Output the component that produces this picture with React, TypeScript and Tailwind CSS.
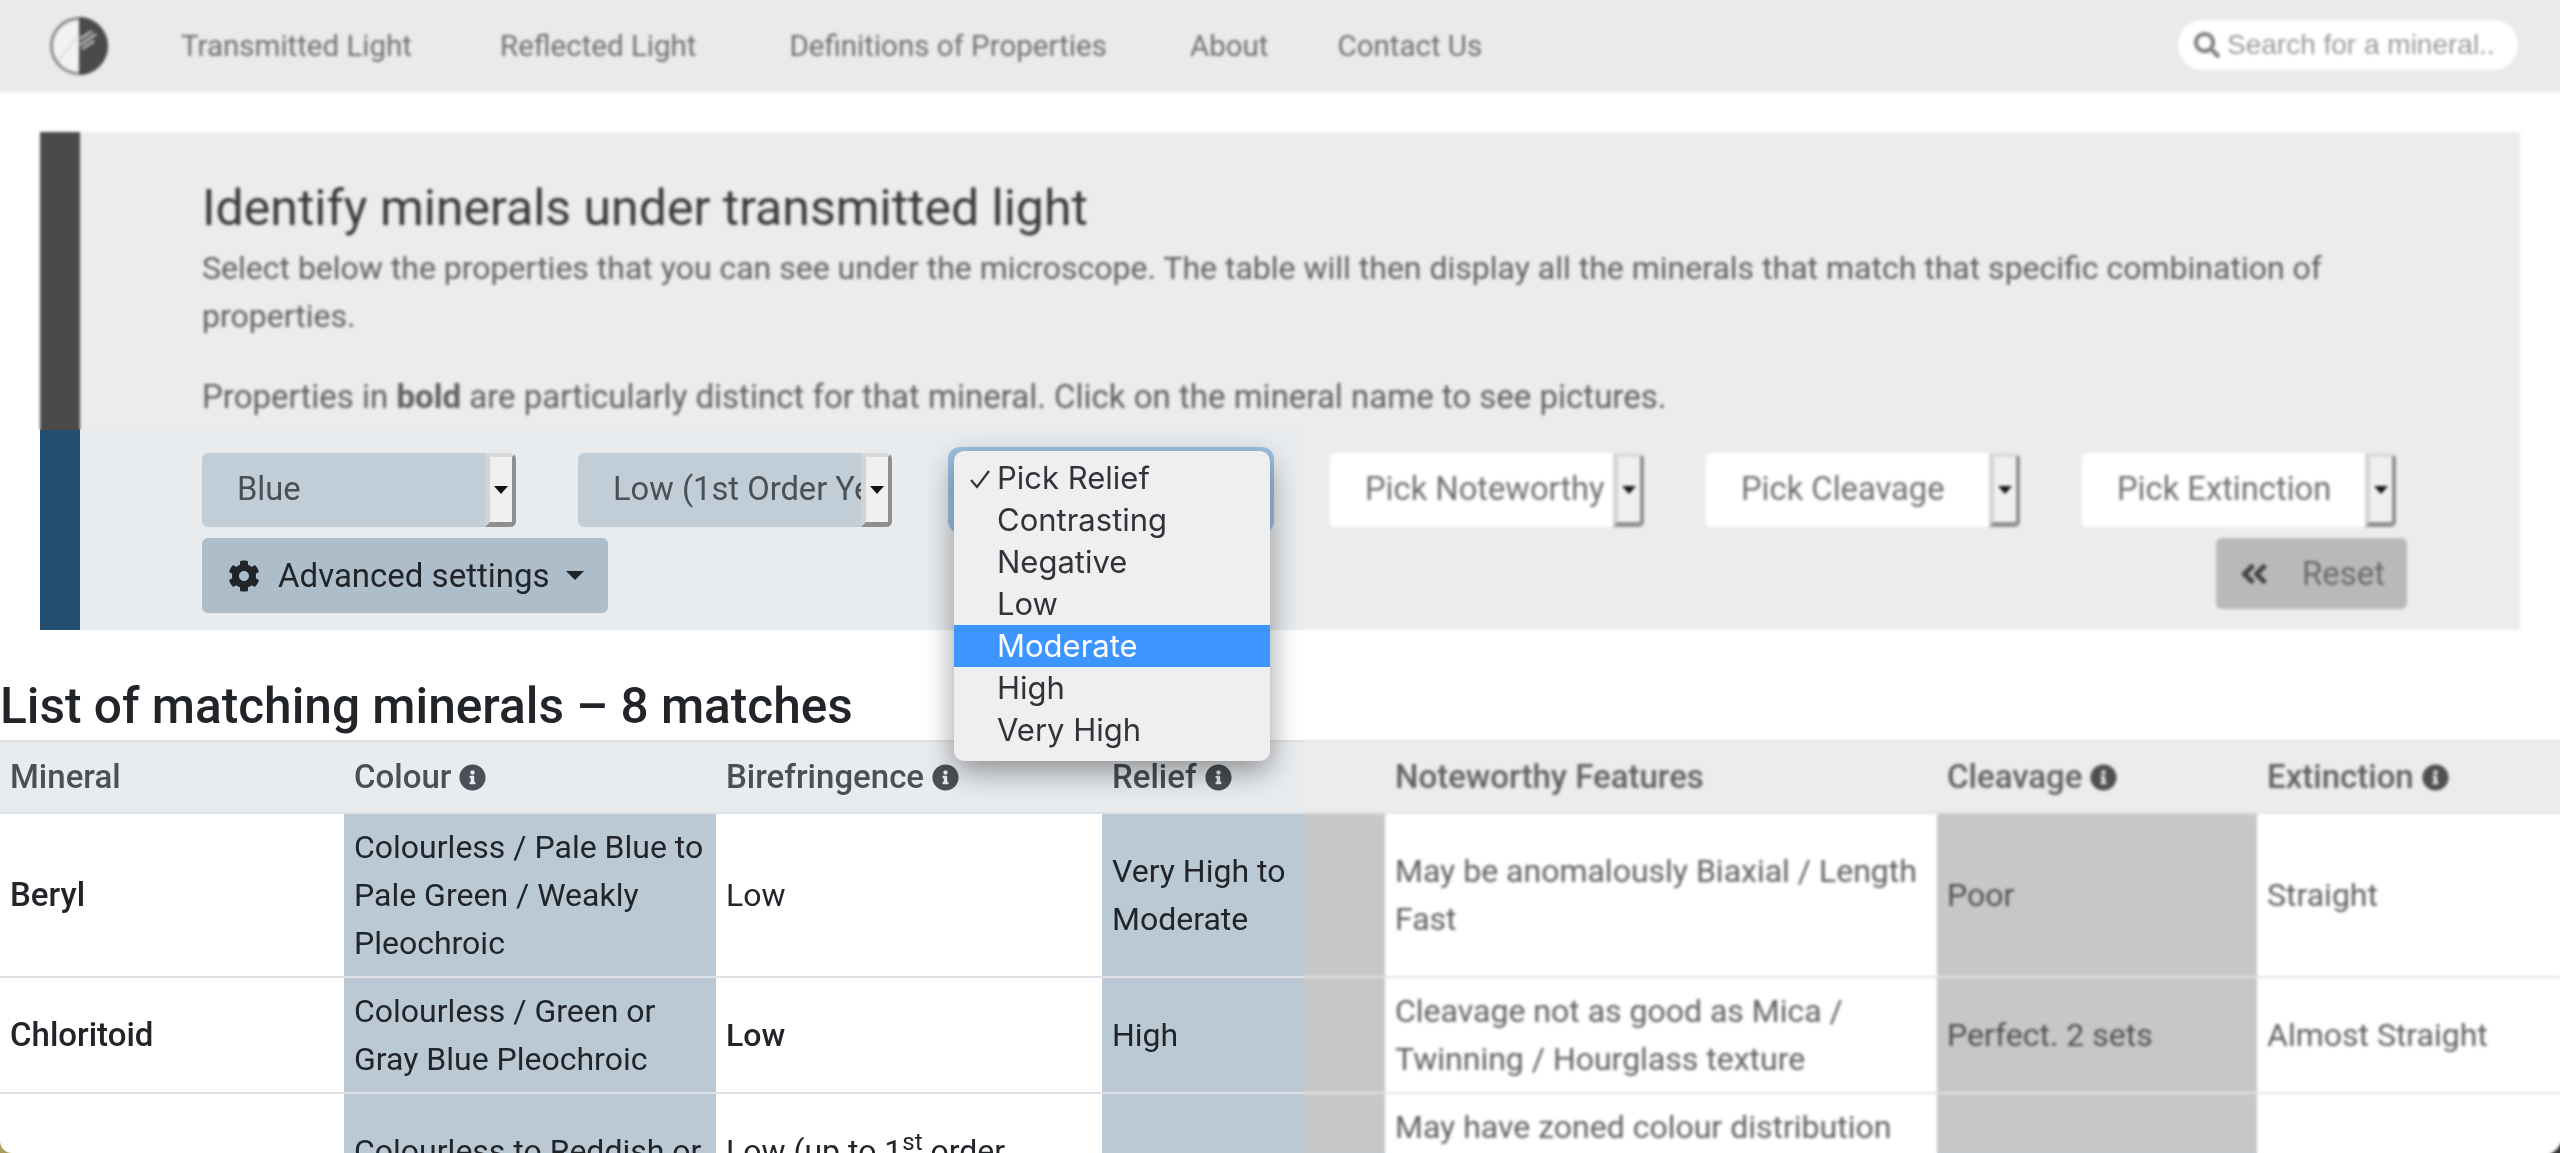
import { FaCog, FaInfoCircle, FaAngleDoubleLeft, FaSearch } from "react-icons/fa";

const RobotoStack = "font-['Roboto',sans-serif]";

const Logo = () => (
  <svg width="62" height="62" viewBox="0 0 62 62">
    <circle cx="31" cy="31" r="27.5" fill="#f2f2f2" stroke="#8c8c8c" strokeWidth="3" />
    <path d="M31 2a29 29 0 0 1 0 58z" fill="#4a4a4a" />
    <path d="M32 24l12-8M32 30l16-11M34 34l12-8" stroke="#c4c4c4" strokeWidth="2.5" />
    <path d="M10 46 31 20" stroke="#e0e0e0" strokeWidth="2" />
  </svg>
);

const NavLink = ({ label, className }: { label: string; className: string }) => (
  <a className={`text-[29.5px] text-[#6f6f6f] ${className}`}>{label}</a>
);

type PickerProps = {
  label: string;
  active?: boolean;
};

const Picker = ({ label, active }: PickerProps) => {
  return (
    <div
      className={`flex h-[74px] w-[314px] items-center overflow-hidden rounded-[6px] ${
        active ? "bg-[#c1cdd7] text-[#495057]" : "bg-white text-[#6f6f6f]"
      }`}
    >
      <span className="min-w-0 flex-1 overflow-hidden whitespace-nowrap pl-[35px] text-[32.7px]">
        {label}
      </span>
      <span className="flex w-[31px] shrink-0 items-center justify-center self-stretch border-t-[4px] border-r-[4px] border-b-[5px] border-l-[5px] border-t-[#dadada] border-r-[#8f8f8f] border-b-[#8f8f8f] border-l-[#d4d4d4] bg-[#f0f0f0]">
        <span className="h-0 w-0 border-x-[7px] border-t-[8px] border-x-transparent border-t-[#111]" />
      </span>
    </div>
  );
};

const reliefOptions = [
  "Pick Relief",
  "Contrasting",
  "Negative",
  "Low",
  "Moderate",
  "High",
  "Very High",
];

const ReliefPicker = () => (
  <div className="relative h-[74px] w-[314px] rounded-[6px] bg-[#c1cdd7] shadow-[0_0_0_6px_#9fc1e6]">
    <ul className="absolute left-0 top-[-2px] z-20 w-[316px] rounded-[10px] bg-[#efefef] pb-[10px] pt-[6px] text-[31px] leading-[42px] text-[#30343a] shadow-[0_10px_30px_rgba(0,0,0,0.4)] font-['Inter',sans-serif]">
      {reliefOptions.map((option) => (
        <li
          key={option}
          className={`relative pl-[43px] ${
            option === "Moderate" ? "bg-[#3d96ff] text-white" : ""
          }`}
        >
          {option === "Pick Relief" && (
            <svg
              className="absolute left-[15px] top-[11px]"
              width="22"
              height="22"
              viewBox="0 0 22 22"
            >
              <path d="M2 12l6 7L20 3" fill="none" stroke="#30343a" strokeWidth="2.2" />
            </svg>
          )}
          {option}
        </li>
      ))}
    </ul>
  </div>
);

const InfoIcon = () => (
  <FaInfoCircle className="ml-[8px] inline-block align-[-3px] text-[27px] text-[#495057]" />
);

const cellClass = "px-[10px] py-[9px] align-middle";
const nameCell = "px-[10px] py-[9px] align-middle text-[33px] font-medium";
const tint = "bg-[#bbc9d5]";
const faded = "text-[#606060]";
const fadedTint = "text-[#505050]";

const App = () => {
  return (
    <div
      className={`relative h-[1153px] w-[2560px] overflow-hidden bg-linear-to-r from-[#a89a5a] to-[#333333] ${RobotoStack}`}
    >
      <div className="h-full overflow-hidden rounded-b-[12px] bg-white">
        <nav className="flex h-[92px] items-center bg-[#eaeaea] pl-[48px] pr-[42px]">
          <Logo />
          <NavLink label="Transmitted Light" className="ml-[71px]" />
          <NavLink label="Reflected Light" className="ml-[88px]" />
          <NavLink label="Definitions of Properties" className="ml-[93px]" />
          <NavLink label="About" className="ml-[83px]" />
          <NavLink label="Contact Us" className="ml-[69px]" />
          <div className="ml-auto mt-[-2px] flex h-[50px] w-[340px] items-center rounded-full bg-white pl-[16px] text-[28px] text-[#9a9a9a] font-['Liberation_Sans',sans-serif]">
            <FaSearch className="mr-[7px] text-[26px] text-[#808080]" />
            Search for a mineral..
          </div>
        </nav>

        <section className="ml-[40px] mr-[40px] mt-[40px] flex h-[498px] bg-[#e9ecef]">
          <div className="flex w-[40px] shrink-0 flex-col">
            <div className="h-[298px] bg-[#4a4a4a]" />
            <div className="flex-1 bg-[#234e70]" />
          </div>
          <div className="flex-1 pl-[122px] pr-[113px] pt-[45px]">
            <h1 className="text-[50px] leading-[62px] text-[#343a40]">
              Identify minerals under transmitted light
            </h1>
            <p className="mt-[5px] text-[32px] leading-[48px] text-[#5f5f5f]">
              Select below the properties that you can see under the microscope. The table will then
              display all the minerals that match that specific combination of properties.
            </p>
            <p className="mt-[33px] text-[33px] leading-[48px] text-[#5f5f5f]">
              Properties in <b>bold</b> are particularly distinct for that mineral. Click on the
              mineral name to see pictures.
            </p>
            <div className="mt-[32px] flex gap-[62px]">
              <Picker label="Blue" active />
              <Picker label="Low (1st Order Yellow)" active />
              <ReliefPicker />
              <Picker label="Pick Noteworthy" />
              <Picker label="Pick Cleavage" />
              <Picker label="Pick Extinction" />
            </div>
            <div className="mt-[11px] flex items-start justify-between">
              <button className="flex h-[75px] w-[406px] items-center rounded-[6px] bg-[#aebdca] pl-[26px] text-[33px] text-[#212529]">
                <FaCog className="mr-[18px] text-[32px]" />
                Advanced settings
                <span className="ml-[16px] h-0 w-0 border-x-[9px] border-t-[9px] border-x-transparent border-t-[#212529]" />
              </button>
              <button className="flex h-[71px] w-[191px] items-center rounded-[6px] bg-[#b9b9b9] pl-[22px] text-[33px] text-[#6a6a6a]">
                <FaAngleDoubleLeft className="mr-[32px] text-[32px] text-[#444]" />
                Reset
              </button>
            </div>
          </div>
        </section>

        <h2 className="mt-[48px] h-[62px] text-[49.6px] font-medium leading-[56px] text-[#212529]">
          List of matching minerals – 8 matches
        </h2>

        <table className="w-[2560px] table-fixed border-collapse text-[32px] leading-[48px] text-[#212529]">
          <colgroup>
            <col className="w-[344px]" />
            <col className="w-[372px]" />
            <col className="w-[386px]" />
            <col className="w-[283px]" />
            <col className="w-[552px]" />
            <col className="w-[320px]" />
            <col className="w-[303px]" />
          </colgroup>
          <thead>
            <tr className="h-[72px] border-t-2 border-[#dee2e6] bg-[#e9ecef] text-left text-[33px] text-[#495057]">
              <th className="px-[10px] font-medium">Mineral</th>
              <th className="px-[10px] font-medium">
                Colour
                <InfoIcon />
              </th>
              <th className="px-[10px] font-medium">
                Birefringence
                <InfoIcon />
              </th>
              <th className="px-[10px] font-medium">
                Relief
                <InfoIcon />
              </th>
              <th className={`px-[10px] font-medium ${faded}`}>Noteworthy Features</th>
              <th className={`px-[10px] font-medium ${faded}`}>
                Cleavage
                <InfoIcon />
              </th>
              <th className={`px-[10px] font-medium ${faded}`}>
                Extinction
                <InfoIcon />
              </th>
            </tr>
          </thead>
          <tbody>
            <tr className="border-t-2 border-[#dee2e6]">
              <td className={nameCell}>Beryl</td>
              <td className={`${cellClass} ${tint}`}>
                Colourless / Pale Blue to Pale Green / Weakly Pleochroic
              </td>
              <td className={cellClass}>Low</td>
              <td className={`${cellClass} ${tint}`}>Very High to Moderate</td>
              <td className={`${cellClass} ${faded}`}>May be anomalously Biaxial / Length Fast</td>
              <td className={`${cellClass} ${tint} ${fadedTint}`}>Poor</td>
              <td className={`${cellClass} ${faded}`}>Straight</td>
            </tr>
            <tr className="border-t-2 border-[#dee2e6]">
              <td className={nameCell}>Chloritoid</td>
              <td className={`${cellClass} ${tint}`}>Colourless / Green or Gray Blue Pleochroic</td>
              <td className={`${cellClass} font-medium`}>Low</td>
              <td className={`${cellClass} ${tint}`}>High</td>
              <td className={`${cellClass} ${faded}`}>
                Cleavage not as good as Mica / Twinning / Hourglass texture
              </td>
              <td className={`${cellClass} ${tint} ${fadedTint}`}>Perfect. 2 sets</td>
              <td className={`${cellClass} ${faded}`}>Almost Straight</td>
            </tr>
            <tr className="border-t-2 border-[#dee2e6]">
              <td className={nameCell}>Cordierite</td>
              <td className={`${cellClass} ${tint}`}>Colourless to Reddish or Blue Pleochroic</td>
              <td className={cellClass}>
                Low (up to 1<sup>st</sup> order Yellow)
              </td>
              <td className={`${cellClass} ${tint}`}>Moderate</td>
              <td className={`${cellClass} ${faded}`}>
                May have zoned colour distribution and inclusions with a dark halo around them
              </td>
              <td className={`${cellClass} ${tint} ${fadedTint}`}>Poor</td>
              <td className={`${cellClass} ${faded}`}>Straight</td>
            </tr>
          </tbody>
        </table>
      </div>

      {/* frosted, desaturated parts of the shot */}
      <div className="absolute inset-x-0 top-0 z-10 h-[430px] backdrop-blur-[1.5px] backdrop-grayscale" />
      <div className="absolute bottom-0 left-[1304px] right-0 top-[430px] z-10 backdrop-blur-[1.5px] backdrop-grayscale" />
    </div>
  );
};

export default App;
